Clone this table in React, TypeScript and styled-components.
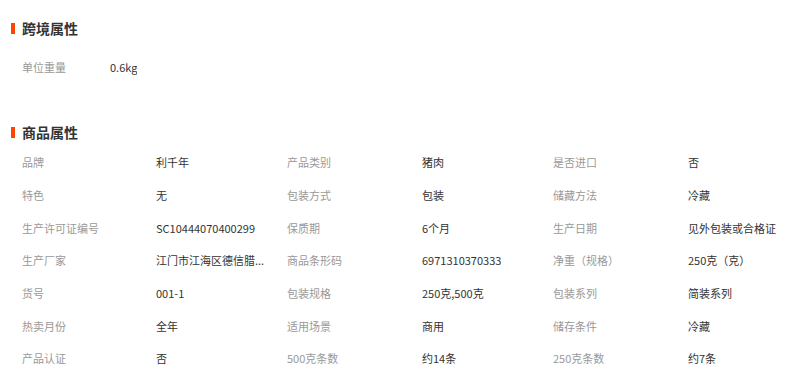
import React from "react";
import styled, { createGlobalStyle } from "styled-components";

const Global = createGlobalStyle`
  html, body { margin: 0; padding: 0; background: #fff; }
  body { font-family: "Noto Sans CJK SC", "Noto Sans", sans-serif; }
`;

const Page = styled.div`
  width: 810px;
  padding: 18px 0 0 11px;
  box-sizing: border-box;
`;

const Section = styled.section<{ $gap: number }>`
  margin-bottom: ${(p) => p.$gap}px;
`;

const Title = styled.h3<{ $after: number }>`
  display: flex;
  align-items: center;
  gap: 7px;
  margin: 0 0 ${(p) => p.$after}px 0;
  height: 20px;
  font-size: 14px;
  font-weight: 700;
  color: #333;
  line-height: 20px;
  &::before {
    content: "";
    width: 4px;
    height: 11px;
    background: #ff4400;
  }
`;

const Grid = styled.div<{ $cols: string; $row: string }>`
  display: grid;
  grid-template-columns: ${(p) => p.$cols};
  grid-auto-rows: ${(p) => p.$row};
  padding-left: 11px;
  font-size: 11px;
`;

const Label = styled.div`
  color: #999;
  display: flex;
  align-items: center;
  white-space: nowrap;
`;

const Value = styled.div`
  color: #333;
  display: flex;
  align-items: center;
  min-width: 0;
  padding-right: 14px;
  span {
    white-space: nowrap;
    overflow: hidden;
  }
`;

const cross = [["单位重量", "0.6kg"]];

const props: [string, string][] = [
  ["品牌", "利千年"],
  ["产品类别", "猪肉"],
  ["是否进口", "否"],
  ["特色", "无"],
  ["包装方式", "包装"],
  ["储藏方法", "冷藏"],
  ["生产许可证编号", "SC10444070400299"],
  ["保质期", "6个月"],
  ["生产日期", "见外包装或合格证"],
  ["生产厂家", "江门市江海区德信腊..."],
  ["商品条形码", "6971310370333"],
  ["净重（规格）", "250克（克）"],
  ["货号", "001-1"],
  ["包装规格", "250克,500克"],
  ["包装系列", "简装系列"],
  ["热卖月份", "全年"],
  ["适用场景", "商用"],
  ["储存条件", "冷藏"],
  ["产品认证", "否"],
  ["500克条数", "约14条"],
  ["250克条数", "约7条"],
];

export default function App() {
  return (
    <Page>
      <Global />
      <Section $gap={39}>
        <Title $after={13}>跨境属性</Title>
        <Grid $cols="88px 200px" $row="32px">
          {cross.map(([k, v]) => (
            <React.Fragment key={k}>
              <Label>{k}</Label>
              <Value>
                <span>{v}</span>
              </Value>
            </React.Fragment>
          ))}
        </Grid>
      </Section>
      <Section $gap={0}>
        <Title $after={4}>商品属性</Title>
        <Grid $cols="134px 131px 135px 131px 135px 1fr" $row="32.67px">
          {props.map(([k, v]) => (
            <React.Fragment key={k}>
              <Label>{k}</Label>
              <Value>
                <span>{v}</span>
              </Value>
            </React.Fragment>
          ))}
        </Grid>
      </Section>
    </Page>
  );
}
